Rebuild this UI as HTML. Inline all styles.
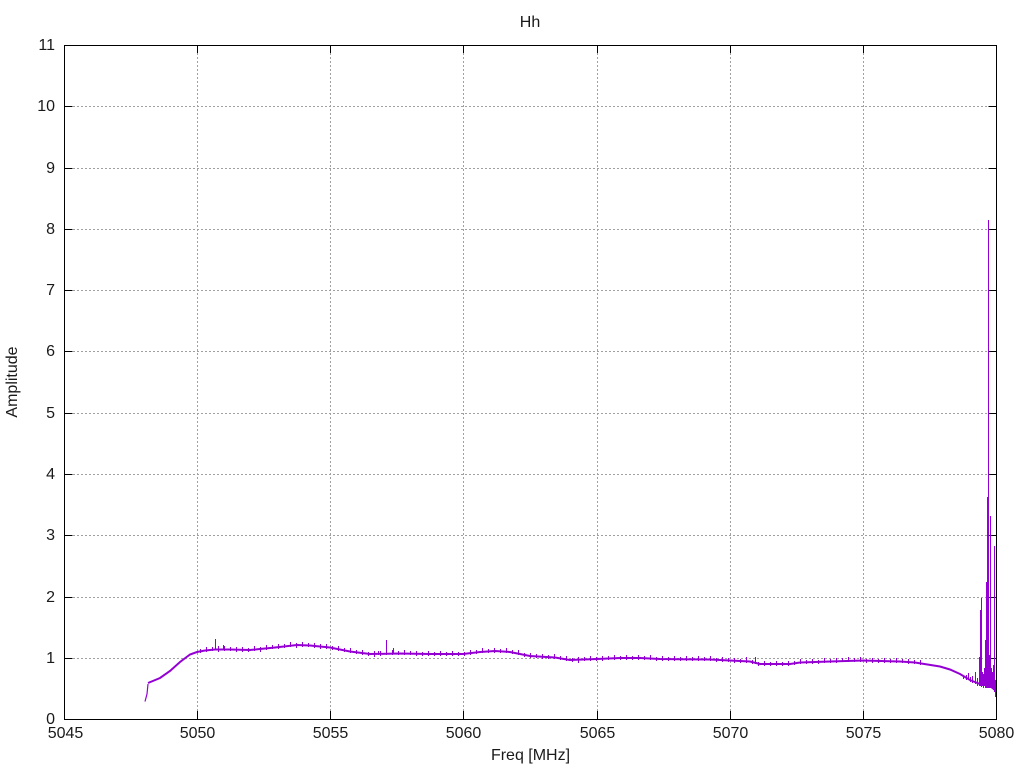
<!DOCTYPE html>
<html><head><meta charset="utf-8"><title>Hh</title>
<style>html,body{margin:0;padding:0;background:#fff;width:1024px;height:768px;overflow:hidden}svg{display:block}text{font-family:"Liberation Sans",sans-serif;font-size:16px;fill:#1a1a1a}</style></head>
<body>
<svg width="1024" height="768" viewBox="0 0 1024 768" xmlns="http://www.w3.org/2000/svg">
<rect width="1024" height="768" fill="#fff"/>
<g stroke="#a0a0a0" stroke-width="1" stroke-dasharray="2 2" fill="none" shape-rendering="crispEdges">
<path d="M73 106.500H988M73 168.500H988M73 229.500H988M73 290.500H988M73 351.500H988M73 413.500H988M73 474.500H988M73 535.500H988M73 597.500H988M73 658.500H988"/>
<path d="M197.500 53V711M330.500 53V711M463.500 53V711M597.500 53V711M730.500 53V711M863.500 53V711"/>
</g>
<g stroke="#000" stroke-width="1" fill="none" shape-rendering="crispEdges">
<path d="M64.500 106.500h8M64.500 168.500h8M64.500 229.500h8M64.500 290.500h8M64.500 351.500h8M64.500 413.500h8M64.500 474.500h8M64.500 535.500h8M64.500 597.500h8M64.500 658.500h8"/>
<path d="M996.500 106.500h-8M996.500 168.500h-8M996.500 229.500h-8M996.500 290.500h-8M996.500 351.500h-8M996.500 413.500h-8M996.500 474.500h-8M996.500 535.500h-8M996.500 597.500h-8M996.500 658.500h-8"/>
<path d="M197.500 719v-8M330.500 719v-8M463.500 719v-8M597.500 719v-8M730.500 719v-8M863.500 719v-8"/>
<path d="M197.500 45v8M330.500 45v8M463.500 45v8M597.500 45v8M730.500 45v8M863.500 45v8"/>
</g>
<g fill="none" stroke="#9400d3">
<polyline stroke-width="1.200" points="145,701.500 147,694 148,684"/>
<polyline stroke-width="2" points="148,683 160,678 170,671 180,662 190,654.500 197,652 205,650.500 215,649.500 230,649.500 250,650 260,649 275,647.500 297,645 310,645.500 330,647.500 350,651.500 370,654 400,653.500 430,654 463,654 480,652 495,651 510,652 530,656 555,657.500 570,660 597,659 620,658 640,658 660,659 680,659.300 710,659.500 730,660.500 750,661.500 760,664 790,664 800,662.500 830,661.500 863,660.500 900,661.500 915,662.500 940,666.500 950,669.500 960,674 970,680 980,684 990,686 995,690"/>
<path stroke-width="1" shape-rendering="crispEdges" d="M200.500 649v4M206.500 647v5M212.500 647v4M218.500 646v6M224.500 646v5M230.500 647v4M236.500 647v5M242.500 647v5M248.500 648v4M254.500 646v5M260.500 647v5M266.500 645v5M272.500 645v4M278.500 644v5M284.500 644v4M290.500 642v5M296.500 643v5M302.500 642v5M308.500 643v4M314.500 643v5M320.500 644v5M326.500 644v5M332.500 646v4M338.500 646v5M344.500 648v4M350.500 648v5M356.500 650v4M362.500 650v5M368.500 652v4M374.500 651v6M380.500 651v5M386.500 651v4M392.500 650v5M398.500 651v4M404.500 650v5M410.500 651v4M416.500 651v5M422.500 652v4M428.500 651v5M434.500 652v4M440.500 651v5M446.500 652v4M452.500 651v5M458.500 652v4M464.500 652v4M470.500 650v5M476.500 650v4M482.500 648v5M488.500 649v4M494.500 648v5M500.500 649v4M506.500 648v5M512.500 650v4M518.500 650v5M524.500 653v4M530.500 653v5M536.500 654v4M542.500 654v5M548.500 655v4M554.500 654v5M560.500 656v4M566.500 656v5M572.500 658v4M578.500 657v6M584.500 657v4M590.500 656v5M596.500 657v4M602.500 656v5M608.500 656v4M614.500 655v5M620.500 656v4M626.500 655v5M632.500 656v4M638.500 655v5M644.500 656v4M650.500 655v5M656.500 657v4M662.500 656v5M668.500 657v4M674.500 656v5M680.500 657v4M686.500 656v5M692.500 657v4M698.500 656v5M704.500 657v4M710.500 656v5M716.500 658v4M722.500 657v5M728.500 658v4M734.500 658v5M740.500 659v4M746.500 657v6M752.500 660v4M755.500 657v7M758.500 662v4M764.500 661v5M770.500 662v4M776.500 661v5M782.500 662v4M788.500 661v5M794.500 661v4M800.500 659v5M806.500 660v4M812.500 659v5M818.500 660v4M824.500 658v5M830.500 659v4M836.500 658v5M842.500 658v4M848.500 657v5M854.500 658v4M860.500 657v5M866.500 659v4M872.500 658v5M878.500 659v4M884.500 658v5M890.500 659v4M896.500 658v5M902.500 659v4M908.500 659v5M914.500 660v4M920.500 660v5"/>
<path stroke-width="1" shape-rendering="crispEdges" d="M215.500 639v11M223.500 645v5M386.500 640v14M393.500 648v6M378.500 651v4"/>
<path stroke-width="1" shape-rendering="crispEdges" d="M988.500 220V688M987.500 497V688M986.500 582V688M990.500 516V688M994.500 546V692M989.500 655V688M981.500 598V687M980.500 610V686M979.500 657V686M985.500 640V688M991.500 668V688M992.500 672V688M993.500 665V690M995.500 680V697M996.500 682V702M983.500 674V688M984.500 668V686M982.500 672V686M977.500 678V686M975.500 672V684M972.500 676V683M970.500 677V682M968.500 673V680M966.500 675V680M963.500 676V679"/>
</g>
<rect x="64.500" y="45.500" width="932" height="674" fill="none" stroke="#000" stroke-width="1" shape-rendering="crispEdges"/>
<g text-anchor="end">
<text x="55" y="724">0</text>
<text x="55" y="663">1</text>
<text x="55" y="602">2</text>
<text x="55" y="540">3</text>
<text x="55" y="479">4</text>
<text x="55" y="418">5</text>
<text x="55" y="356">6</text>
<text x="55" y="295">7</text>
<text x="55" y="234">8</text>
<text x="55" y="173">9</text>
<text x="55" y="111">10</text>
<text x="55" y="50">11</text>
</g>
<g text-anchor="middle">
<text x="65.500" y="738">5045</text>
<text x="197.500" y="738">5050</text>
<text x="330.500" y="738">5055</text>
<text x="463.500" y="738">5060</text>
<text x="597.500" y="738">5065</text>
<text x="730.500" y="738">5070</text>
<text x="863.500" y="738">5075</text>
<text x="996.500" y="738">5080</text>
<text x="530" y="27">Hh</text>
<text x="530.500" y="760">Freq [MHz]</text>
<text transform="translate(17 382) rotate(-90)">Amplitude</text>
</g>
</svg>
</body></html>
